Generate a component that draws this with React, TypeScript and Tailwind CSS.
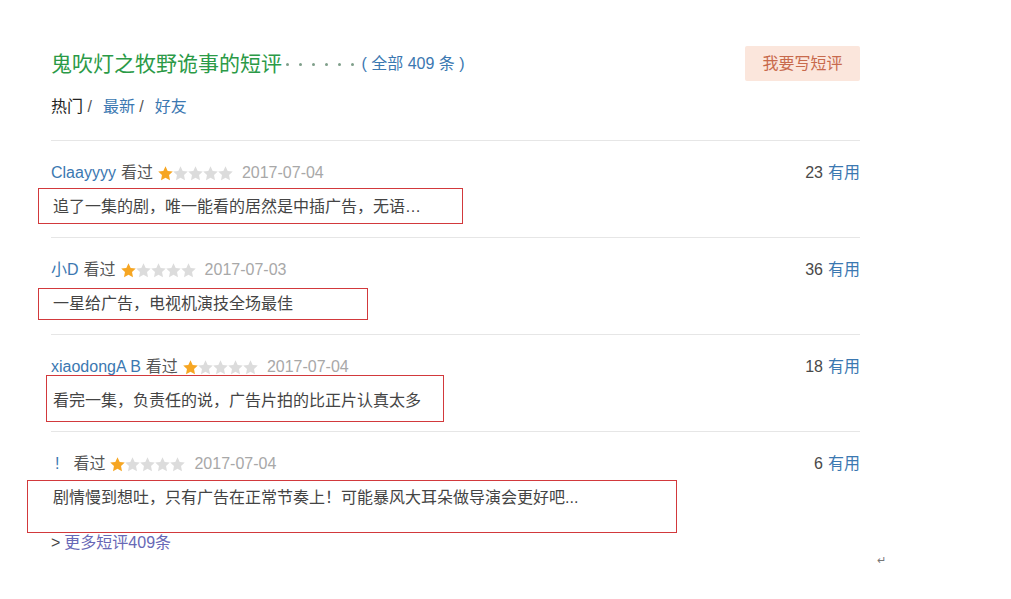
import React from 'react'

const font = { fontFamily: '"Liberation Sans", Arial, "Noto Sans CJK SC", sans-serif' }

const Star = ({ on }: { on: boolean }) => (
    <svg width="15" height="15" viewBox="0 0 20 20">
        <path
            d="M10 0.4l2.9 6.2 6.8.8-5 4.7 1.3 6.8L10 15.5l-6 3.4 1.3-6.8-5-4.7 6.8-.8z"
            fill={on ? '#f6a623' : '#dcdcdc'}
        />
    </svg>
)

const reviews = [
    { name: 'Claayyyy', date: '2017-07-04', votes: 23, text: '追了一集的剧，唯一能看的居然是中插广告，无语…', box: 'top-[47px] left-[-13px] w-[425px] h-[36px]' },
    { name: '小D', date: '2017-07-03', votes: 36, text: '一星给广告，电视机演技全场最佳', box: 'top-[50px] left-[-13px] w-[330px] h-[32px]' },
    { name: 'xiaodongA B', date: '2017-07-04', votes: 18, text: '看完一集，负责任的说，广告片拍的比正片认真太多', box: 'top-[40px] left-[-5px] w-[398px] h-[47px]' },
    { name: '!', date: '2017-07-04', votes: 6, text: '剧情慢到想吐，只有广告在正常节奏上！可能暴风大耳朵做导演会更好吧...', box: 'top-[48px] left-[-24px] w-[650px] h-[53px]' },
]

export default function App() {
    return (
        <div className='relative w-[1011px] h-[599px] bg-white overflow-hidden pl-[51px] pt-[46px]' style={font}>
            <div className='w-[809px]'>
                {/* header */}
                <div className='flex items-center justify-between h-[35px]'>
                    <h2 className='flex items-center text-[21px] text-[#2b9a47] leading-[35px] whitespace-nowrap'>
                        鬼吹灯之牧野诡事的短评
                        <span className='inline-flex items-center gap-[10.5px] ml-[4px] mr-[8px] mt-[2px]'>
                            {[0, 1, 2, 3, 4, 5].map(d => <span key={d} className='w-[2.5px] h-[2.5px] rounded-full bg-[#7f9f8a]'></span>)}
                        </span>
                        <span className='text-[16px] text-[#3b78b1]'>( 全部 409 条 )</span>
                    </h2>
                    <button className='w-[115px] h-[35px] bg-[#fbe6dc] text-[#c86a4c] text-[16px] rounded-[2px]'>我要写短评</button>
                </div>

                {/* tabs */}
                <div className='mt-[14px] text-[16px] leading-[24px] flex gap-[11px] text-[#3b78b1]'>
                    <span className='text-[#222]'>热门 <span className='text-[#555]'>/</span></span>
                    <span>最新 <span className='text-[#555]'>/</span></span>
                    <span>好友</span>
                </div>

                <div className='mt-[21px]'>
                    {reviews.map((r, i) => (
                        <div key={i} className={`relative pt-[20px] ${i < reviews.length - 1 ? 'pb-[18px]' : ''} border-t border-[#e6e6e6]`}>
                            <div className='flex items-center justify-between text-[16px] leading-[24px]'>
                                <div className='flex items-center'>
                                    <span className={`text-[#3b78b1] ${r.name === '!' ? 'ml-[4px] mr-[14px]' : 'mr-[5px]'}`}>{r.name}</span>
                                    <span className='text-[#555]'>看过</span>
                                    <span className='flex ml-[5px]'>
                                        {[0, 1, 2, 3, 4].map(s => <Star key={s} on={s === 0} />)}
                                    </span>
                                    <span className='ml-[9px] text-[#a8a8a8]'>{r.date}</span>
                                </div>
                                <div>
                                    <span className='text-[#494949]'>{r.votes}</span>
                                    <span className='text-[#3b78b1] ml-[5px]'>有用</span>
                                </div>
                            </div>
                            <p className='mt-[10px] text-[16px] leading-[24px] text-[#444] pl-[2px]'>{r.text}</p>
                            <div className={`absolute border border-[#d2393c] ${r.box}`}></div>
                        </div>
                    ))}
                </div>

                <div className='mt-[21px] text-[16px] leading-[24px]'>
                    <span className='text-[#444]'>&gt;</span>
                    <span className='text-[#6868b6] ml-[4px]'>更多短评409条</span>
                </div>
            </div>
            <span className='absolute left-[877px] top-[552px] text-[11px] text-[#777]'>↵</span>
        </div>
    )
}
